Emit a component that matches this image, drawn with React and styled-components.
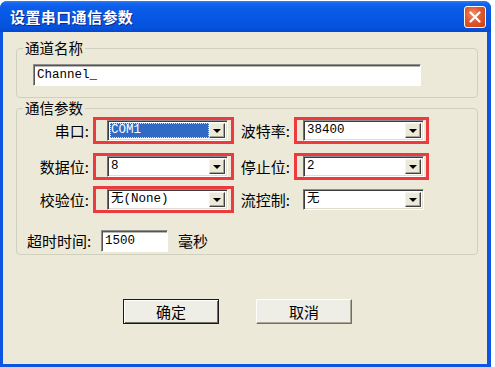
import React from "react";
import styled, { createGlobalStyle } from "styled-components";

const GlobalStyle = createGlobalStyle`
  html, body {
    margin: 0;
    padding: 0;
    background: #fff;
  }
  body {
    font-family: "Noto Sans CJK SC", "Liberation Sans", sans-serif;
  }
`;

const Screen = styled.div`
  width: 495px;
  height: 367px;
  padding-top: 1px;
  box-sizing: border-box;
  overflow: hidden;
`;

const Window = styled.div`
  width: 491px;
  height: 366px;
  display: flex;
  flex-direction: column;
  background: #0b55e2;
  border-radius: 7px 7px 0 0;
  overflow: hidden;
`;

const TitleBar = styled.div`
  height: 31px;
  flex-shrink: 0;
  display: flex;
  align-items: center;
  justify-content: space-between;
  padding: 0 5px 0 10px;
  background: linear-gradient(
    to bottom,
    #2f7ff5 0%,
    #1466f0 8%,
    #0a5ce9 20%,
    #0657e4 55%,
    #0552dd 85%,
    #0348cf 100%
  );
`;

const Title = styled.span`
  color: #fff;
  font-size: 15px;
  font-weight: bold;
  letter-spacing: 0.4px;
  text-shadow: 1px 1px 0 #0a2a8a;
`;

const CloseButton = styled.button`
  width: 22px;
  height: 22px;
  padding: 0;
  border: 1px solid #fff;
  border-radius: 3px;
  display: flex;
  align-items: center;
  justify-content: center;
  background: radial-gradient(circle at 40% 35%, #f09070 0%, #e0582e 45%, #c8400f 100%);
`;

const Body = styled.div`
  flex: 1;
  margin: 0 4px 3px 3px;
  background: #ece9d8;
  padding: 8px 9px 0 13px;
  display: flex;
  flex-direction: column;
`;

const GroupBox = styled.fieldset`
  margin: ${(p) => p.$top}px 0 0 0;
  padding: 0;
  border: 1px solid #d0d0bf;
  border-radius: 4px;
  min-inline-size: 0;
`;

const GroupTitle = styled.legend`
  margin-left: 6px;
  padding: 0 2px;
  font-size: 14.5px;
  line-height: 16px;
  color: #000;
`;

const NameRow = styled.div`
  padding: 3px 0 11px 16px;
`;

const TextBox = styled.input`
  width: ${(p) => p.$w}px;
  height: 22px;
  box-sizing: border-box;
  margin: 0;
  padding: 0 0 0 3px;
  border: 1px solid;
  border-color: #8e8e8e #fff #fff #8e8e8e;
  box-shadow: inset 1px 1px #555, inset 0 2px #b8b8b0;
  background: #fff;
  font: 12.5px "Liberation Mono", "Noto Sans CJK SC", monospace;
  color: #000;
  outline: none;
`;

const ParamGrid = styled.div`
  display: grid;
  grid-template-columns: 76px 141px 60px 135px;
  grid-template-rows: 27px 36px 33px 41px;
  align-items: end;
  padding-top: 1px;
`;

const Label = styled.div`
  height: 27px;
  line-height: 27px;
  text-align: right;
  padding-right: 4px;
  font-size: 15px;
  color: #000;
  white-space: nowrap;
`;

const FieldFrame = styled.div`
  height: 27px;
  box-sizing: border-box;
  display: flex;
  align-items: center;
  border: 3px solid ${(p) => (p.$marked ? "#ec3a3e" : "transparent")};
  padding: 0 2px 0 ${(p) => p.$inset}px;
`;

const Combo = styled.div`
  width: 121px;
  height: 21px;
  box-sizing: border-box;
  display: flex;
  padding: 2px;
  background: #fff;
  border: 1px solid;
  border-color: #8e8e8e #fff #fff #6e6e6e;
  box-shadow: inset 1px 1px #3c3c3c, inset -1px -1px #e0ddd0;
`;

const ComboValue = styled.div`
  flex: 1;
  padding-left: 1px;
  font: 12.5px/15px "Liberation Mono", "Noto Sans CJK SC", monospace;
  color: ${(p) => (p.$selected ? "#fff" : "#000")};
  background: ${(p) => (p.$selected ? "#316ac5" : "transparent")};
  outline: ${(p) => (p.$selected ? "1px dotted #e8e4a8" : "none")};
  outline-offset: -1px;
  white-space: nowrap;
  overflow: hidden;
`;

const DropButton = styled.div`
  width: 16px;
  box-sizing: border-box;
  display: flex;
  align-items: center;
  justify-content: center;
  background: #ece9d8;
  border: 1px solid;
  border-color: #f4f3ee #404040 #404040 #f4f3ee;
  box-shadow: inset -1px -1px #a7a594;
`;

const Arrow = styled.span`
  width: 0;
  height: 0;
  border-left: 4px solid transparent;
  border-right: 4px solid transparent;
  border-top: 4px solid #000;
  margin-top: 1px;
`;

const TimeoutRow = styled.div`
  grid-column: 1 / -1;
  height: 27px;
  display: flex;
  align-items: center;
  padding-left: 10px;
`;

const TimeoutLabel = styled.span`
  width: 74px;
  font-size: 15px;
  color: #000;
  white-space: nowrap;
`;

const Unit = styled.span`
  margin-left: 10px;
  font-size: 15px;
  color: #000;
`;

const ButtonRow = styled.div`
  display: flex;
  gap: 37px;
  margin: 44px 0 0 107px;
`;

const DialogButton = styled.button`
  width: 96px;
  height: 25px;
  padding: 0;
  font-family: "Noto Sans CJK SC", sans-serif;
  font-size: 15px;
  color: #000;
  background: #efeee6;
  border: 1px solid;
  border-color: ${(p) =>
    p.$default ? "#1a1a1a" : "#fdfdfb #716f64 #716f64 #fdfdfb"};
  box-shadow: ${(p) =>
    p.$default
      ? "inset 1px 1px #fdfdfb, inset -1px -1px #716f64"
      : "inset -1px -1px #aca899"};
`;

const ComboBox = ({ value, selected }) => (
  <Combo>
    <ComboValue $selected={selected}>{value}</ComboValue>
    <DropButton>
      <Arrow />
    </DropButton>
  </Combo>
);

const rows = [
  [
    { label: "串口:", value: "COM1", marked: true, selected: true },
    { label: "波特率:", value: "38400", marked: true },
  ],
  [
    { label: "数据位:", value: "8", marked: true },
    { label: "停止位:", value: "2", marked: true },
  ],
  [
    { label: "校验位:", value: "无(None)", marked: true },
    { label: "流控制:", value: "无", marked: false },
  ],
];

const App = () => (
  <Screen>
    <GlobalStyle />
    <Window>
      <TitleBar>
        <Title>设置串口通信参数</Title>
        <CloseButton>
          <svg width="12" height="12" viewBox="0 0 12 12">
            <path
              d="M1.5 1.5 L10.5 10.5 M10.5 1.5 L1.5 10.5"
              stroke="#fff"
              strokeWidth="2.2"
              strokeLinecap="round"
            />
          </svg>
        </CloseButton>
      </TitleBar>
      <Body>
        <GroupBox $top={0}>
          <GroupTitle>通道名称</GroupTitle>
          <NameRow>
            <TextBox $w={388} defaultValue="Channel_" />
          </NameRow>
        </GroupBox>
        <GroupBox $top={2}>
          <GroupTitle>通信参数</GroupTitle>
          <ParamGrid>
            {rows.map(([left, right]) => (
              <React.Fragment key={left.label}>
                <Label>{left.label}</Label>
                <FieldFrame $marked={left.marked} $inset={11}>
                  <ComboBox value={left.value} selected={left.selected} />
                </FieldFrame>
                <Label>{right.label}</Label>
                <FieldFrame $marked={right.marked} $inset={6}>
                  <ComboBox value={right.value} selected={right.selected} />
                </FieldFrame>
              </React.Fragment>
            ))}
            <TimeoutRow>
              <TimeoutLabel>超时时间:</TimeoutLabel>
              <TextBox $w={67} defaultValue="1500" />
              <Unit>毫秒</Unit>
            </TimeoutRow>
          </ParamGrid>
        </GroupBox>
        <ButtonRow>
          <DialogButton $default>确定</DialogButton>
          <DialogButton>取消</DialogButton>
        </ButtonRow>
      </Body>
    </Window>
  </Screen>
);

export default App;
